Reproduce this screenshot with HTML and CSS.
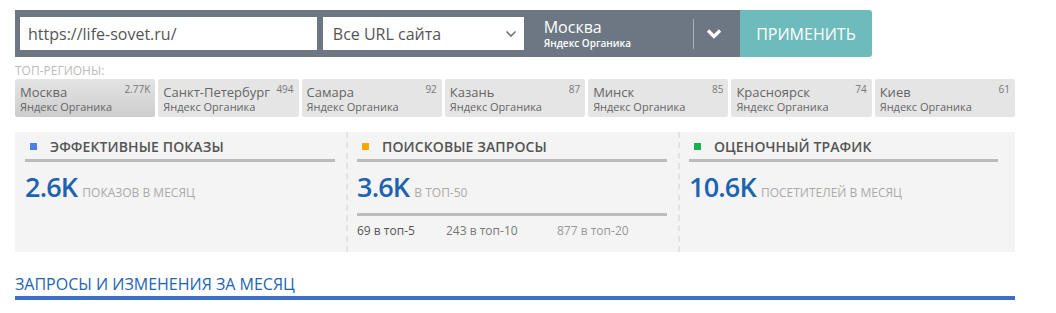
FILE: index.html
```html
<!DOCTYPE html>
<html lang="ru">
<head>
  <meta charset="UTF-8">
  <title>Анализ сайта</title>
  <meta name="viewport" content="width=device-width, initial-scale=1">
  <link rel="stylesheet" href="styles.css">
</head>
<body>
  <div class="page">
    <form class="search-bar">
      <div class="search-fields">
        <input class="url-input" type="text" value="https://life-sovet.ru/">
        <div class="url-select">
          <span>Все URL сайта</span>
          <svg width="12" height="8" viewBox="0 0 12 8"><path d="M1.5 1.5 L6 6 L10.5 1.5" fill="none" stroke="#777" stroke-width="1.6"/></svg>
        </div>
        <div class="region-pick">
          <div class="region-name">Москва</div>
          <div class="region-src">Яндекс Органика</div>
        </div>
        <div class="region-toggle">
          <svg width="16" height="12" viewBox="0 0 16 12"><path d="M2 2.5 L8 8.5 L14 2.5" fill="none" stroke="#fff" stroke-width="3.2"/></svg>
        </div>
      </div>
      <button type="button" class="apply">ПРИМЕНИТЬ</button>
    </form>

    <div class="top-label">ТОП-РЕГИОНЫ:</div>
    <div class="regions">
      <div class="region active"><span class="count">2.77K</span><div class="city">Москва</div><div class="src">Яндекс Органика</div></div>
      <div class="region"><span class="count">494</span><div class="city">Санкт-Петербург</div><div class="src">Яндекс Органика</div></div>
      <div class="region"><span class="count">92</span><div class="city">Самара</div><div class="src">Яндекс Органика</div></div>
      <div class="region"><span class="count">87</span><div class="city">Казань</div><div class="src">Яндекс Органика</div></div>
      <div class="region"><span class="count">85</span><div class="city">Минск</div><div class="src">Яндекс Органика</div></div>
      <div class="region"><span class="count">74</span><div class="city">Красноярск</div><div class="src">Яндекс Органика</div></div>
      <div class="region"><span class="count">61</span><div class="city">Киев</div><div class="src">Яндекс Органика</div></div>
    </div>

    <section class="stats">
      <div class="stat">
        <h3><i class="dot blue"></i>ЭФФЕКТИВНЫЕ ПОКАЗЫ</h3>
        <div class="value"><b>2.6K</b><span>ПОКАЗОВ В МЕСЯЦ</span></div>
      </div>
      <div class="stat">
        <h3><i class="dot orange"></i>ПОИСКОВЫЕ ЗАПРОСЫ</h3>
        <div class="value split"><b>3.6K</b><span>В ТОП-50</span></div>
        <div class="tops">
          <span class="t5">69 в топ-5</span>
          <span class="t10">243 в топ-10</span>
          <span class="t20">877 в топ-20</span>
        </div>
      </div>
      <div class="stat">
        <h3><i class="dot green"></i>ОЦЕНОЧНЫЙ ТРАФИК</h3>
        <div class="value"><b>10.6K</b><span>ПОСЕТИТЕЛЕЙ В МЕСЯЦ</span></div>
      </div>
    </section>

    <h2 class="section-title">ЗАПРОСЫ И ИЗМЕНЕНИЯ ЗА МЕСЯЦ</h2>
  </div>
</body>
</html>
```

FILE: styles.css
```css
body { margin: 0; font-family: "Open Sans", sans-serif; background: #fff; color: #555; }
.page { width: 1000px; padding: 10px 15px; }

.search-bar { display: flex; height: 47px; }
.search-fields { display: flex; align-items: center; background: #6c7783; padding: 0 6px 0 5px; width: 714px; }
.url-input { width: 300px; height: 33px; box-sizing: border-box; border: none; padding: 0 8px; font: 16px "Open Sans", sans-serif; color: #555; outline: none; }
.url-select { display: flex; align-items: center; justify-content: space-between; margin-left: 6px; width: 203px; height: 33px; box-sizing: border-box; background: #fff; padding: 0 7px 0 10px; font-size: 16px; color: #555; }
.region-pick { margin-left: 17px; padding-left: 3px; color: #fff; width: 151px; }
.region-name { font-size: 16px; line-height: 18px; }
.region-src { font-size: 10px; font-weight: 600; line-height: 14px; }
.region-toggle { display: flex; align-items: center; height: 30px; border-left: 1px solid #a5adb5; padding: 0 12px 0 12px; }
.apply { width: 132px; border: none; background: #6dbbbb; color: #fff; font: 16px "Open Sans", sans-serif; border-radius: 0 3px 3px 0; cursor: pointer; }

.top-label { margin-top: 7px; font-size: 12px; color: #bbb; line-height: 14px; }
.regions { display: flex; gap: 3px; margin-top: 1px; }
.region { flex: 1; position: relative; height: 38px; box-sizing: border-box; background: #e5e5e5; border-radius: 2px; padding: 5px 5px 0 5px; }
.region.active { background: linear-gradient(#e4e4e4, #cdcdcd); }
.city { font-size: 13px; color: #666; line-height: 16px; }
.src { font-size: 11px; color: #666; line-height: 14px; }
.count { position: absolute; top: 3px; right: 5px; font-size: 10px; color: #777; }

.stats { display: flex; margin-top: 15px; background: #f4f4f4; height: 120px; }
.stat { width: 310px; padding: 0 11px 0 10px; }
.stat + .stat { border-left: 2px dashed #e3e3e3; padding-left: 9px; }
.stat:last-child { flex: 1; padding-right: 17px; }
.stat h3 { margin: 0; padding: 2px 0 0 5px; height: 25px; border-bottom: 3px solid #bbb; font-size: 14px; font-weight: 600; color: #555; letter-spacing: 0.1px; display: flex; align-items: center; }
.dot { display: inline-block; width: 7px; height: 7px; margin-right: 13px; }
.dot.blue { background: #4a80e8; }
.dot.orange { background: #f8a900; }
.dot.green { background: #1bb14c; }
.value { padding-top: 8px; display: flex; align-items: baseline; }
.value b { font-size: 27px; font-weight: 600; color: #1c63b0; letter-spacing: -0.8px; line-height: 34px; }
.value span { font-size: 12px; color: #aaa; margin-left: 5px; }
.value.split { border-bottom: 3px solid #bbb; padding-bottom: 9px; }
.tops { display: flex; padding-top: 6px; font-size: 12px; }
.t5 { color: #555; width: 89px; }
.t10 { color: #777; width: 111px; }
.t20 { color: #999; }

.section-title { margin: 22px 0 0; font-size: 16px; font-weight: 400; color: #1e64b4; line-height: 20px; border-bottom: 4px solid #3b6fc8; padding-bottom: 2px; }
```
